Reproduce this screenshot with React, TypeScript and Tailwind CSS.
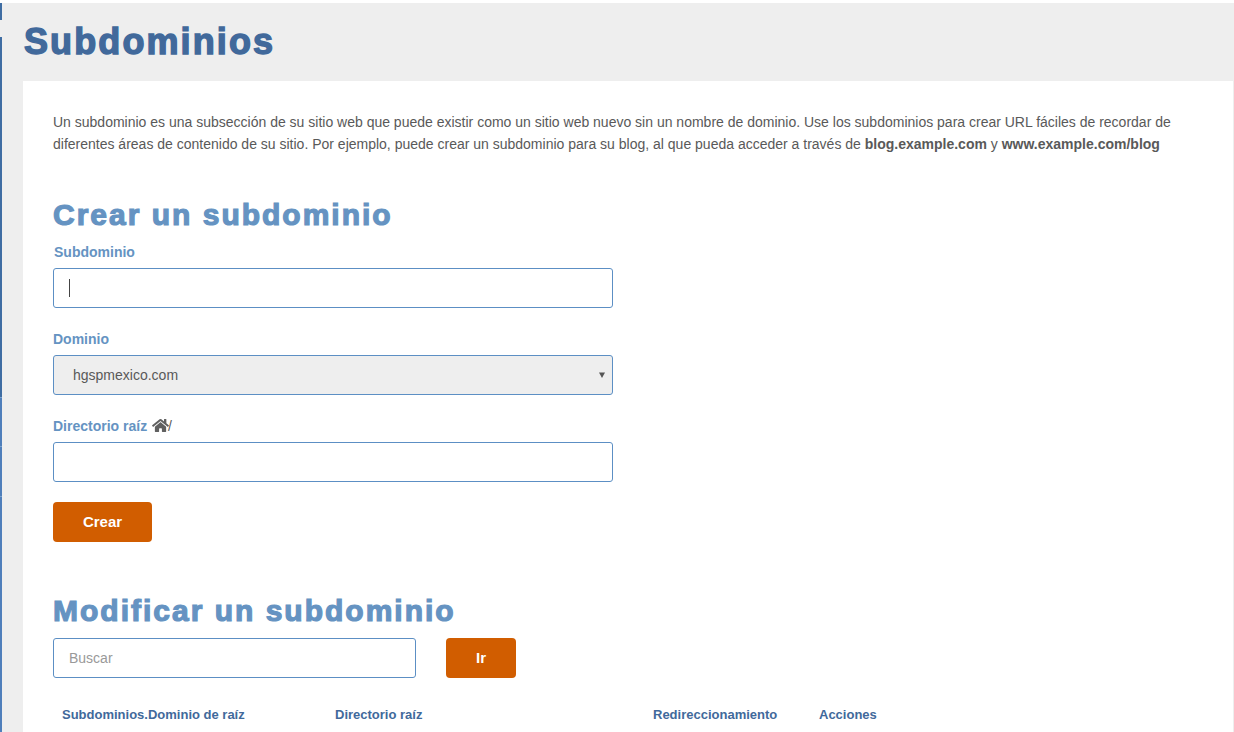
import React from "react";

const font = { fontFamily: '"Liberation Sans", Arial, sans-serif' };

function Home() {
  return (
    <svg viewBox="0 0 576 512" className="ml-px -mr-px inline-block h-[15px] w-[17px] align-[-2px]" fill="#606060">
      <path d="M280.4 148.300 96 300.100V464a16 16 0 0 0 16 16l112-.3a16 16 0 0 0 16-16V368a16 16 0 0 1 16-16h64a16 16 0 0 1 16 16v95.600a16 16 0 0 0 16 16.100l112 .3a16 16 0 0 0 16-16V300L295.700 148.300a12.200 12.200 0 0 0-15.300 0zM571.600 251.500 488 182.600V44a12 12 0 0 0-12-12h-56a12 12 0 0 0-12 12v72.600L318.500 43a48 48 0 0 0-61 0L4.300 251.500a12 12 0 0 0-1.600 16.900l25.500 31A12 12 0 0 0 45.200 301l235.200-193.700a12.200 12.200 0 0 1 15.300 0L530.900 301a12 12 0 0 0 16.900-1.600l25.500-31a12 12 0 0 0-1.700-16.900z" />
    </svg>
  );
}

export default function App() {
  return (
    <div className="h-[732px] w-[1234px] overflow-hidden bg-white pt-[3px] text-[14px] text-[#595959]" style={font}>
      <div className="flex h-[729px]">
        <div className="flex w-[2px] flex-col">
          <div className="h-[17px] bg-[#3f6da3]" />
          <div className="h-[17px] bg-[#eeeeee]" />
          <div className="h-[360px] bg-[#3f6da3]" />
          <div className="h-px bg-[#7ba3d0]" />
          <div className="h-[48px] bg-[#4f7fbb]" />
          <div className="h-px bg-[#7ba3d0]" />
          <div className="h-[49px] bg-[#4f7fbb]" />
          <div className="h-px bg-[#7ba3d0]" />
          <div className="flex-1 bg-[#4f7fbb]" />
        </div>
        <div className="flex-1 bg-[#eeeeee] pl-[21px] pr-px">
          <h1 className="h-[78px] pl-px pt-[19px] text-[36px] leading-[40px] font-bold tracking-[2.1px] text-[#41699b] [-webkit-text-stroke:1.4px_#41699b]">Subdominios</h1>
          <div className="h-[651px] overflow-hidden bg-white pl-[30px] pt-[30px]">
            <p className="w-[1140px] leading-[22px]">
              Un subdominio es una subsección de su sitio web que puede existir como un sitio web nuevo sin un nombre de dominio. Use los subdominios para crear URL fáciles de recordar de diferentes áreas de contenido de su sitio. Por ejemplo, puede crear un subdominio para su blog, al que pueda acceder a través de <b>blog.example.com</b> y <b>www.example.com/blog</b>
            </p>
            <h2 className="mt-[40px] text-[30px] leading-[40px] font-bold tracking-[2px] text-[#6593c2] [-webkit-text-stroke:1.2px_#6593c2]">Crear un subdominio</h2>
            <form className="w-[560px]">
              <label className="mt-[7px] block pl-px font-bold leading-[20px] text-[#6593c2]">Subdominio</label>
              <div className="mt-[6px] flex h-[40px] items-center rounded-[3px] border border-[#5c8fc4] pl-[15px]">
                <span className="h-[18px] w-px bg-[#444]" />
              </div>
              <label className="mt-[21px] block font-bold leading-[20px] text-[#6593c2]">Dominio</label>
              <div className="mt-[6px] flex h-[40px] items-center justify-between rounded-[3px] border border-[#5c8fc4] bg-[#eeeeee] pl-[19px] pr-[7px]">
                <span>hgspmexico.com</span>
                <svg viewBox="0 0 6 6" className="h-[6px] w-[6px]" fill="#555"><path d="M0 0.500h6L3 6z" /></svg>
              </div>
              <label className="mt-[21px] block font-bold leading-[20px] text-[#6593c2]">
                Directorio raíz <Home /><span className="font-normal text-[#595959]">/</span>
              </label>
              <div className="mt-[6px] h-[40px] rounded-[3px] border border-[#5c8fc4]" />
              <button type="button" className="mt-[20px] block h-[40px] w-[99px] rounded-[4px] bg-[#d15d00] text-[15px] font-bold text-white">Crear</button>
            </form>
            <h2 className="mt-[49px] text-[30px] leading-[40px] font-bold tracking-[2px] text-[#6593c2] [-webkit-text-stroke:1.2px_#6593c2]">Modificar un subdominio</h2>
            <div className="mt-[7px] flex gap-[30px]">
              <div className="flex h-[40px] w-[363px] items-center rounded-[3px] border border-[#5c8fc4] pl-[15px] text-[#999]">Buscar</div>
              <button type="button" className="h-[40px] w-[70px] rounded-[4px] bg-[#d15d00] text-[15px] font-bold text-white">Ir</button>
            </div>
            <div className="mt-[27px] flex pl-[9px] text-[13px] font-bold leading-[20px] text-[#41699b]">
              <span className="w-[273px]">Subdominios.Dominio de raíz</span>
              <span className="w-[318px]">Directorio raíz</span>
              <span className="w-[166px]">Redireccionamiento</span>
              <span>Acciones</span>
            </div>
          </div>
        </div>
      </div>
    </div>
  );
}
